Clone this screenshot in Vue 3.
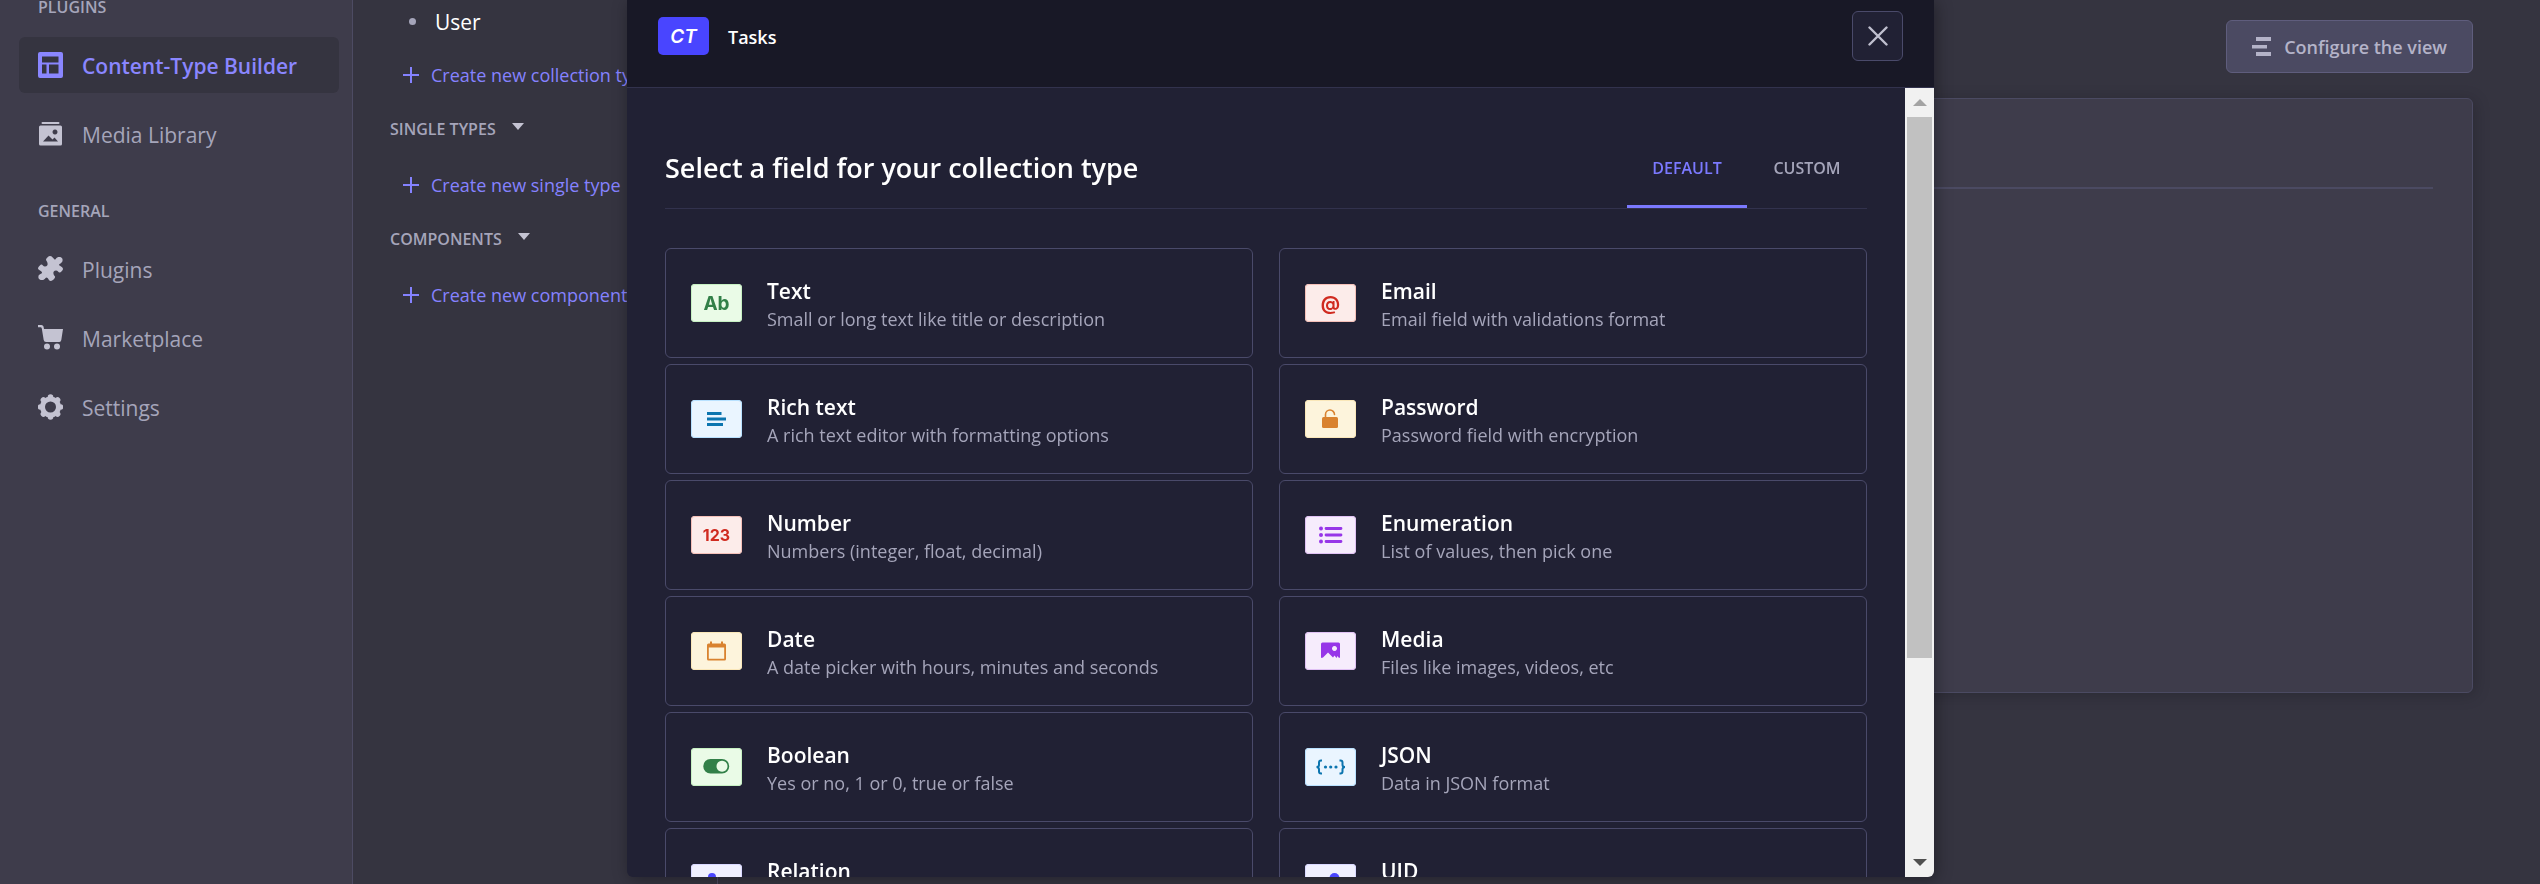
<script setup>
const mainLinks = [
  { label: 'Content-Type Builder', icon: 'layout', active: true },
  { label: 'Media Library', icon: 'media' },
]
const generalLinks = [
  { label: 'Plugins', icon: 'puzzle' },
  { label: 'Marketplace', icon: 'cart' },
  { label: 'Settings', icon: 'gear' },
]
const navSections = [
  { title: 'Plugins', links: mainLinks },
  { title: 'General', links: generalLinks },
]
const typeGroups = [
  { title: 'Single types', action: 'Create new single type' },
  { title: 'Components', action: 'Create new component' },
]
const fields = [
  { name: 'Text', desc: 'Small or long text like title or description', tone: 'green', glyph: 'Ab', size: 'large' },
  { name: 'Email', desc: 'Email field with validations format', tone: 'red', glyph: '@', size: 'large' },
  { name: 'Rich text', desc: 'A rich text editor with formatting options', tone: 'blue', icon: 'lines' },
  { name: 'Password', desc: 'Password field with encryption', tone: 'yellow', icon: 'lock' },
  { name: 'Number', desc: 'Numbers (integer, float, decimal)', tone: 'red', glyph: '123', size: 'small' },
  { name: 'Enumeration', desc: 'List of values, then pick one', tone: 'purple', icon: 'list' },
  { name: 'Date', desc: 'A date picker with hours, minutes and seconds', tone: 'yellow', icon: 'calendar' },
  { name: 'Media', desc: 'Files like images, videos, etc', tone: 'purple', icon: 'picture' },
  { name: 'Boolean', desc: 'Yes or no, 1 or 0, true or false', tone: 'green', icon: 'toggle' },
  { name: 'JSON', desc: 'Data in JSON format', tone: 'blue', icon: 'json' },
  { name: 'Relation', desc: 'Refers to a Collection Type', tone: 'indigo', icon: 'relation' },
  { name: 'UID', desc: 'Unique identifier', tone: 'indigo', icon: 'key' },
]
const teeth = [0, 45, 90, 135, 180, 225, 270, 315]
</script>

<template>
  <div class="page">
    <nav class="sidebar" aria-label="Main">
      <section v-for="section in navSections" :key="section.title" class="nav-section">
        <h2 class="nav-title">{{ section.title }}</h2>
        <a v-for="link in section.links" :key="link.label" href="#" class="nav-link" :class="{ active: link.active }">
          <svg class="nav-icon" viewBox="0 0 25 26" aria-hidden="true">
            <path v-if="link.icon === 'layout'" fill-rule="evenodd" d="M2 0H23Q25 0 25 2V24Q25 26 23 26H2Q0 26 0 24V2Q0 0 2 0ZM4 4.500V10.500H20.500V4.500ZM4 12.500V21.500H8.500V12.500ZM11 12.500V21.500H20.500V12.500Z" />
            <path v-else-if="link.icon === 'media'" fill-rule="evenodd" d="M4.500 1H20.500Q21.500 1 21.500 2T20.500 3H4.500Q3.500 3 3.500 2T4.500 1ZM2.500 4.500H22.500Q24 4.500 24 6V23Q24 24.500 22.500 24.500H2.500Q1 24.500 1 23V6Q1 4.500 2.500 4.500ZM17 8.500a2.500 2.500 0 1 0 .01 0ZM5 20.500H20L16.500 16.500L14.500 18.500L10.500 14.500Z" />
            <path v-else-if="link.icon === 'puzzle'" d="M12 0C14 0 15 2 16.500 3.500C18 4 18 1 21 1C24 1 25 3 24.500 5C24 7 21 8 21 9C22 10 25 11 25 13C25 14 23 16 22 16.500C20.500 17 20 14.500 18 14.500C16 14.500 15 16 15.500 18C16 20 17.500 20 17 21.500C16 23.500 14 25 12.500 25C11 25 10 21.500 8.500 21.500C7 22 7 24 4 24C1 24 0 22 .5 20C1 18 4 18 4 16.500C4 15 0 14 0 12.500C0 11 2 9 3 8.500C4.500 8 5 10.500 7 10.500C9 10.500 10 9 9.500 7C9 5 8 4.500 8 3.500C8.500 2 10.500 0 12 0Z" />
            <g v-else-if="link.icon === 'cart'">
              <path d="M0 0H3.500Q5 0 5.500 1.500L6 4H25L23.300 15Q23 17 21.300 17H8Q6 17 5.700 15L3.800 3.500Q3.600 2.200 2.500 2.200H0Z" />
              <circle cx="9" cy="21.500" r="3" />
              <circle cx="19" cy="21.500" r="3" />
            </g>
            <g v-else>
              <circle cx="12.500" cy="13" r="8" fill="none" stroke="currentColor" stroke-width="5" />
              <circle v-for="t in teeth" :key="t" cx="12.500" cy="3" r="2.800" :transform="`rotate(${t} 12.500 13)`" />
            </g>
          </svg>
          <span class="nav-label">{{ link.label }}</span>
        </a>
      </section>
    </nav>

    <aside class="subnav" aria-label="Content types">
      <a href="#" class="type-link"><span class="bullet"></span>User</a>
      <a href="#" class="create-link">
        <svg viewBox="0 0 16 16" aria-hidden="true"><path d="M8 0V16M0 8H16" stroke="currentColor" stroke-width="2" /></svg>
        <span>Create new collection type</span>
      </a>
      <section v-for="group in typeGroups" :key="group.title" class="type-group">
        <button type="button" class="group-title">
          {{ group.title }}
          <svg viewBox="0 0 12 7" aria-hidden="true"><path d="M0 0H12L6 7Z" /></svg>
        </button>
        <a href="#" class="create-link">
          <svg viewBox="0 0 16 16" aria-hidden="true"><path d="M8 0V16M0 8H16" stroke="currentColor" stroke-width="2" /></svg>
          <span>{{ group.action }}</span>
        </a>
      </section>
    </aside>

    <main class="content">
      <div class="toolbar">
        <button type="button" class="configure">
          <svg viewBox="0 0 19 19" aria-hidden="true"><path d="M4 0H19V4H4ZM0 8H15V11.500H0ZM4 15H19V19H4Z" /></svg>
          Configure the view
        </button>
      </div>
      <div class="panel"><hr class="panel-rule" /></div>
    </main>

    <div class="overlay">
      <div class="modal" role="dialog" aria-modal="true" aria-labelledby="crumb">
        <header class="modal-header">
          <span class="ct-badge">CT</span>
          <span id="crumb" class="crumb">Tasks</span>
          <button type="button" class="close" aria-label="Close">
            <svg viewBox="0 0 20 20" aria-hidden="true"><path d="M1.500 1.500L18.500 18.500M18.500 1.500L1.500 18.500" fill="none" stroke="currentColor" stroke-width="2.400" stroke-linecap="round" /></svg>
          </button>
        </header>

        <div class="modal-body">
          <div class="scroll-area">
            <div class="heading-row">
              <h1>Select a field for your collection type</h1>
              <div class="tabs" role="tablist">
                <button type="button" role="tab" aria-selected="true" class="tab selected">Default</button>
                <button type="button" role="tab" aria-selected="false" class="tab">Custom</button>
              </div>
            </div>

            <div class="fields">
              <button v-for="field in fields" :key="field.name" type="button" class="field">
                <span class="badge" :class="[field.tone, field.size]">
                  <template v-if="field.glyph">{{ field.glyph }}</template>
                  <svg v-else viewBox="0 0 51 38" aria-hidden="true">
                    <path v-if="field.icon === 'lines'" d="M16 12H30.500V15H16ZM16 17.500H35V20.500H16ZM16 23H32V26H16Z" />
                    <g v-else-if="field.icon === 'lock'">
                      <rect x="17" y="17" width="16" height="11" rx="1.500" />
                      <path d="M20.500 17.500V14.500A4.500 4.500 0 0 1 29.500 14.500" fill="none" stroke="currentColor" stroke-width="1.600" stroke-linecap="round" />
                    </g>
                    <g v-else-if="field.icon === 'list'">
                      <circle cx="16" cy="12.500" r="2" /><circle cx="16" cy="19" r="2" /><circle cx="16" cy="25.500" r="2" />
                      <path d="M21 12.500H36M21 19H36M21 25.500H36" stroke="currentColor" stroke-width="2.800" stroke-linecap="round" />
                    </g>
                    <path v-else-if="field.icon === 'calendar'" fill-rule="evenodd" d="M19 9.500H21V11.500H30V9.500H32V11.500H33.500Q35 11.500 35 13V27Q35 28.500 33.500 28.500H17.500Q16 28.500 16 27V13Q16 11.500 17.500 11.500H19ZM17.800 15.500V26.800H33.200V15.500Z" />
                    <path v-else-if="field.icon === 'picture'" fill-rule="evenodd" d="M17.500 10.500H33.500Q35 10.500 35 12V25Q35 26 34 26L32.500 24L31.500 26L29.500 23.500L28 25.500L23 20.500L18 25.500Q16 26.500 16 25V12Q16 10.500 17.500 10.500ZM29.500 14a2.500 2.500 0 1 0 .01 0Z" />
                    <path v-else-if="field.icon === 'toggle'" fill-rule="evenodd" d="M19.500 11H31A7 7 0 0 1 31 25.500H19.500A7 7 0 0 1 19.500 11ZM31 12.700a5.500 5.500 0 1 0 .01 0Z" />
                    <g v-else-if="field.icon === 'json'">
                      <path d="M17 12.500H16Q14 12.500 14 14.500V17Q14 19 11.500 19Q14 19 14 21.500V23.500Q14 25.500 16 25.500H17M34.500 12.500H35.500Q37.500 12.500 37.500 14.500V17Q37.500 19 40 19Q37.500 19 37.500 21.500V23.500Q37.500 25.500 35.500 25.500H34.500" fill="none" stroke="currentColor" stroke-width="2" />
                      <circle cx="20.500" cy="19" r="1.600" /><circle cx="25.700" cy="19" r="1.600" /><circle cx="31" cy="19" r="1.600" />
                    </g>
                    <g v-else-if="field.icon === 'relation'">
                      <circle cx="21" cy="13" r="4" /><circle cx="31" cy="19" r="3" /><circle cx="21" cy="26" r="3" />
                      <path d="M21 13L31 19L21 26" fill="none" stroke="currentColor" stroke-width="2" />
                    </g>
                    <g v-else>
                      <circle cx="29.500" cy="14" r="5" />
                      <path d="M27 16L18 26H22" fill="none" stroke="currentColor" stroke-width="3" />
                    </g>
                  </svg>
                </span>
                <span class="field-text">
                  <span class="field-name">{{ field.name }}</span>
                  <span class="field-desc">{{ field.desc }}</span>
                </span>
              </button>
            </div>
          </div>

          <div class="scrollbar">
            <button type="button" class="scroll-btn up" aria-label="Scroll up">
              <svg viewBox="0 0 14 7" aria-hidden="true"><path d="M0 7H14L7 0Z" /></svg>
            </button>
            <div class="track"><div class="thumb"></div></div>
            <button type="button" class="scroll-btn down" aria-label="Scroll down">
              <svg viewBox="0 0 14 7" aria-hidden="true"><path d="M0 0H14L7 7Z" /></svg>
            </button>
          </div>
        </div>
      </div>
    </div>
  </div>
</template>

<style>
body {
  margin: 0;
  background: #353440;
}
</style>

<style scoped>
.page {
  display: flex;
  height: 100vh;
  overflow: hidden;
  background: #353440;
  color: #a5a5ba;
  font-family: "Open Sans", "Noto Sans", sans-serif;
  font-size: 18px;
}
.page *,
.page {
  box-sizing: border-box;
}
svg {
  display: block;
  flex: none;
  fill: currentColor;
}
a {
  color: inherit;
  text-decoration: none;
}
button {
  margin: 0;
  padding: 0;
  border: 0;
  background: none;
  color: inherit;
  font: inherit;
  cursor: pointer;
}

.sidebar {
  flex: none;
  width: 353px;
  padding: 0 13px 0 19px;
  border-right: 1px solid #4d4b63;
  background: #3e3c4b;
}
.nav-section {
  display: flex;
  flex-direction: column;
  gap: 13px;
  margin-bottom: 42px;
}
.nav-title {
  margin: 0 0 9px 19px;
  font-size: 16px;
  line-height: 15px;
  font-weight: 600;
  text-transform: uppercase;
}
.nav-link {
  display: flex;
  align-items: center;
  gap: 19px;
  height: 56px;
  padding: 0 19px;
  border-radius: 6px;
  font-size: 21px;
  white-space: nowrap;
}
.nav-icon {
  width: 25px;
  height: 26px;
  color: #c4c3d2;
}
.nav-label {
  padding-top: 2px;
}
.nav-link.active {
  background: #353440;
  color: #8a86ff;
  font-weight: 600;
}
.nav-link.active .nav-icon {
  color: #8a86ff;
}

.subnav {
  flex: none;
  width: 365px;
  border-right: 1px solid #4d4b63;
  overflow: hidden;
}
.type-link {
  display: flex;
  align-items: center;
  gap: 19px;
  height: 43px;
  margin-bottom: 5px;
  padding-left: 56px;
  color: #fff;
  font-size: 21px;
}
.bullet {
  width: 7px;
  height: 7px;
  border-radius: 50%;
  background: #a5a5ba;
}
.create-link {
  display: flex;
  align-items: center;
  gap: 12px;
  height: 54px;
  padding-left: 50px;
  color: #8582ff;
  white-space: nowrap;
}
.create-link svg {
  width: 16px;
  height: 16px;
}
.type-group {
  display: flex;
  flex-direction: column;
  gap: 2px;
}
.group-title {
  display: flex;
  align-items: center;
  gap: 16px;
  height: 54px;
  padding-left: 37px;
  font-size: 16px;
  font-weight: 600;
  text-transform: uppercase;
}
.group-title svg {
  width: 12px;
  height: 7px;
  margin-bottom: 6px;
  color: #c4c3d2;
}

.content {
  flex: 1;
  padding: 20px 67px 0 88px;
}
.toolbar {
  display: flex;
  justify-content: flex-end;
  margin-bottom: 25px;
}
.configure {
  display: flex;
  align-items: center;
  gap: 13px;
  height: 53px;
  padding: 0 25px;
  border: 1px solid #5f5d7d;
  border-radius: 6px;
  background: #4b4a62;
  color: #b4b3c8;
  font-size: 18px;
  font-weight: 600;
}
.configure svg {
  width: 19px;
  height: 19px;
}
.panel {
  height: 595px;
  padding: 88px 39px 0;
  border: 1px solid #4b4a62;
  border-radius: 6px;
  background: #3e3c4b;
  box-shadow: 2px 2px 16px rgba(3, 3, 5, 0.2);
}
.panel-rule {
  height: 2px;
  margin: 0;
  border: 0;
  background: #4b4a62;
}

.overlay {
  position: fixed;
  inset: 0 0 7px;
  display: flex;
  justify-content: center;
  padding-left: 21px;
}
.modal {
  display: flex;
  flex-direction: column;
  width: 100%;
  max-width: 1307px;
  border-radius: 0 0 6px 6px;
  background: #212134;
  box-shadow: 2px 2px 16px rgba(3, 3, 5, 0.35);
  overflow: hidden;
}
.modal-header {
  display: flex;
  align-items: center;
  flex: none;
  padding: 11px 31px 26px;
  border-bottom: 1px solid #32324d;
  background: #181826;
}
.ct-badge {
  display: flex;
  align-items: center;
  justify-content: center;
  width: 51px;
  height: 38px;
  border-radius: 5px;
  background: #4945ff;
  color: #fff;
  font-family: Inter, sans-serif;
  font-size: 19px;
  font-style: italic;
  font-weight: 600;
}
.crumb {
  margin-left: 19px;
  padding-top: 2px;
  color: #fff;
  font-size: 18px;
  font-weight: 600;
}
.close {
  display: flex;
  align-items: center;
  justify-content: center;
  width: 51px;
  height: 50px;
  margin-left: auto;
  border: 1px solid #4a4a6a;
  border-radius: 6px;
  background: #212134;
  color: #c0c0cf;
}
.close svg {
  width: 20px;
  height: 20px;
}
.modal-body {
  display: flex;
  flex: 1;
  min-height: 0;
}
.scroll-area {
  flex: 1;
  min-width: 0;
  padding: 40px 38px 0;
  overflow: hidden;
}
.heading-row {
  display: flex;
  align-items: stretch;
  justify-content: space-between;
  height: 81px;
  margin-bottom: 39px;
  border-bottom: 1px solid #32324d;
}
h1 {
  margin: 0;
  color: #fff;
  font-size: 27px;
  font-weight: 600;
  line-height: 80px;
}
.tabs {
  display: flex;
}
.tab {
  width: 120px;
  padding-top: 3px;
  border-bottom: 3px solid transparent;
  font-size: 16px;
  font-weight: 600;
  text-transform: uppercase;
}
.tab.selected {
  border-color: #7b79ff;
  color: #7b79ff;
}
.fields {
  display: grid;
  grid-template-columns: 1fr 1fr;
  gap: 6px 26px;
}
.field {
  display: flex;
  align-items: center;
  gap: 25px;
  height: 110px;
  padding: 0 25px;
  border: 1px solid #4a4a6a;
  border-radius: 6px;
  text-align: left;
}
.badge {
  display: flex;
  align-items: center;
  justify-content: center;
  flex: none;
  width: 51px;
  height: 38px;
  border-radius: 4px;
  box-shadow: inset 0 0 0 1px var(--edge);
  background: var(--fill);
  color: var(--ink);
  font-family: Inter, sans-serif;
  font-weight: 700;
}
.badge svg {
  width: 51px;
  height: 38px;
}
.large {
  font-size: 19px;
}
.small {
  font-size: 16px;
}
.green { --fill: #eafbe7; --edge: #c6f0c2; --ink: #328048; }
.red { --fill: #fcecea; --edge: #f5c0b8; --ink: #d02b20; }
.blue { --fill: #eaf5ff; --edge: #b8e1ff; --ink: #0c75af; }
.yellow { --fill: #fdf4dc; --edge: #fae7b9; --ink: #d9822f; }
.purple { --fill: #f6ecfc; --edge: #e0c1f4; --ink: #9736e8; }
.indigo { --fill: #f0f0ff; --edge: #d9d8ff; --ink: #4945ff; }
.field-text {
  display: flex;
  flex-direction: column;
  min-width: 0;
  padding-top: 4px;
}
.field-name {
  color: #fff;
  font-size: 21px;
  font-weight: 600;
  line-height: 28px;
}
.field-desc {
  font-size: 18px;
  line-height: 28px;
}

.scrollbar {
  display: flex;
  flex-direction: column;
  flex: none;
  width: 29px;
  background: #f1f1f1;
}
.scroll-btn {
  display: flex;
  align-items: center;
  justify-content: center;
  height: 29px;
  color: #505050;
}
.scroll-btn.up {
  color: #a3a3a3;
}
.scroll-btn svg {
  width: 14px;
  height: 7px;
}
.track {
  flex: 1;
  padding: 0 2px;
}
.thumb {
  height: 74%;
  background: #c1c1c1;
}
</style>
